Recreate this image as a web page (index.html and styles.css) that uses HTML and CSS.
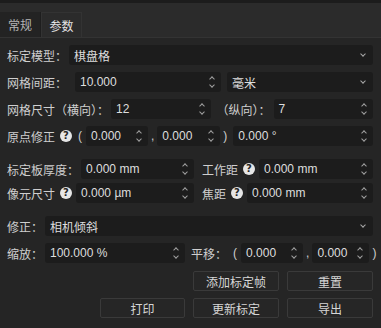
FILE: index.html
```html
<!DOCTYPE html>
<html lang="zh">
<head>
  <meta charset="UTF-8">
  <title>标定参数</title>
  <link rel="stylesheet" href="styles.css">
</head>
<body>
  <div class="tabs">
    <div class="tab">常规</div>
    <div class="tab active">参数</div>
  </div>

  <div class="panel">
    <!-- 标定模型 / 网格 -->
    <div class="group">
      <div class="row">
        <span class="label">标定模型：</span>
        <div class="box combo grow"><span>棋盘格</span><i class="chev"></i></div>
      </div>
      <div class="row gap6">
        <span class="label">网格间距：</span>
        <div class="box spin grow"><span>10.000</span><i class="arrows"></i></div>
        <div class="box combo grow"><span>毫米</span><i class="chev"></i></div>
      </div>
      <div class="row">
        <span class="label">网格尺寸（横向）：</span>
        <div class="box spin grow"><span>12</span><i class="arrows"></i></div>
        <span class="label mid">（纵向）：</span>
        <div class="box spin grow"><span>7</span><i class="arrows"></i></div>
      </div>
      <div class="row">
        <span class="label">原点修正</span><i class="help"></i>
        <span class="paren">(</span>
        <div class="box spin w62"><span>0.000</span><i class="arrows"></i></div>
        <span class="comma">,</span>
        <div class="box spin w63"><span>0.000</span><i class="arrows"></i></div>
        <span class="paren close">)</span>
        <div class="box spin grow"><span>0.000 °</span><i class="arrows"></i></div>
      </div>
    </div>

    <!-- 标定板 / 相机 -->
    <div class="group tight">
      <div class="row">
        <div class="half">
          <span class="label">标定板厚度：</span>
          <div class="box spin grow"><span>0.000 mm</span><i class="arrows"></i></div>
        </div>
        <div class="half right">
          <span class="label">工作距</span><i class="help"></i>
          <div class="box spin grow"><span>0.000 mm</span><i class="arrows"></i></div>
        </div>
      </div>
      <div class="row">
        <div class="half">
          <span class="label">像元尺寸</span><i class="help"></i>
          <div class="box spin grow"><span>0.000 µm</span><i class="arrows"></i></div>
        </div>
        <div class="half right">
          <span class="label">焦距</span><i class="help"></i>
          <div class="box spin grow"><span>0.000 mm</span><i class="arrows"></i></div>
        </div>
      </div>
    </div>

    <!-- 修正 -->
    <div class="group">
      <div class="row">
        <span class="label">修正：</span>
        <div class="box combo grow"><span>相机倾斜</span><i class="chev"></i></div>
      </div>
      <div class="row">
        <span class="label">缩放：</span>
        <div class="box spin w140"><span>100.000 %</span><i class="arrows"></i></div>
        <span class="label shift">平移：</span>
        <span class="paren">(</span>
        <div class="box spin w62"><span>0.000</span><i class="arrows"></i></div>
        <span class="comma">,</span>
        <div class="box spin w57"><span>0.000</span><i class="arrows"></i></div>
        <span class="paren close">)</span>
      </div>
    </div>

    <div class="buttons">
      <span></span>
      <button>添加标定帧</button>
      <button>重置</button>
      <button>打印</button>
      <button>更新标定</button>
      <button>导出</button>
    </div>
  </div>
</body>
</html>
```

FILE: styles.css
```css
* { margin: 0; padding: 0; box-sizing: border-box; }
html, body {
  height: 100%;
}
body {
  background-color: #252525;
  font-family: "Liberation Sans", "Noto Sans CJK SC", sans-serif;
  font-size: 12px;
  color: #d6d6d6;
  overflow: hidden;
}

/* 顶部标签页 */
.tabs {
  display: flex;
  height: 37px;
  padding-top: 12px;
  background: #2b2b2b;
  border-top: 3px solid #1c1c1c;
}
.tab {
  width: 41px;
  display: flex;
  align-items: center;
  justify-content: center;
  color: #b4b4b4;
  background: #232323;
  border-right: 1px solid #1e1e1e;
  margin-top: -3px;
}
.tab.active {
  background: #2b2b2b;
  color: #e4e4e4;
  border: 1px solid #333;
  border-bottom: none;
}

.panel {
  border-top: 1px solid #333;
  padding: 7px 8px 10px 7px;
  background: #252525;
}

.group {
  display: flex;
  flex-direction: column;
  gap: 7px;
  margin-bottom: 13px;
}
.group.tight { gap: 4px; }

.row {
  display: flex;
  align-items: center;
  height: 20px;
}
.row.gap6 { gap: 6px; }

.label {
  white-space: nowrap;
  color: #cfcfcf;
  margin-right: 2px;
}
.label.mid { margin: 0 3px 0 6px; }
.label.shift { margin-left: 6px; margin-right: 4px; }

.half {
  display: flex;
  align-items: center;
  width: 187px;
  height: 20px;
}
.half.right {
  width: auto;
  flex: 1;
  margin-left: 8px;
}

.help {
  width: 12px;
  height: 12px;
  border-radius: 50%;
  background: #e6e6e6;
  margin: 0 4px 0 3px;
  flex: none;
  position: relative;
}
.help::after {
  content: "?";
  position: absolute;
  inset: 0;
  text-align: center;
  font: bold 10px/12px "DejaVu Sans", sans-serif;
  color: #262626;
}

.paren { margin: 0 4px 0 2px; color: #cfcfcf; }
.paren.close { margin: 0 6px 0 3px; }
.comma { margin: 0 3px; color: #cfcfcf; }

.box {
  height: 20px;
  background: #1c1c1c;
  border-radius: 3px;
  display: flex;
  align-items: center;
  padding-left: 5px;
  position: relative;
  color: #dedede;
  flex: none;
}
.box span { flex: 1; white-space: nowrap; }
.grow { flex: 1 1 0; min-width: 0; }
.w62 { width: 62px; }
.w63 { width: 63px; }
.w57 { width: 57px; }
.w140 { width: 140px; }

/* 下拉箭头 */
.chev {
  width: 4px;
  height: 4px;
  border-right: 1px solid #a8a8a8;
  border-bottom: 1px solid #a8a8a8;
  transform: rotate(45deg);
  margin: -2px 8px 0 0;
}

/* 微调箭头 */
.arrows {
  width: 6px;
  height: 14px;
  margin-right: 6px;
  position: relative;
}
.arrows::before,
.arrows::after {
  content: "";
  position: absolute;
  left: 1px;
  width: 3px;
  height: 3px;
  border-left: 1px solid #a0a0a0;
  border-top: 1px solid #a0a0a0;
}
.arrows::before { top: 2px; transform: rotate(45deg); }
.arrows::after { bottom: 2px; transform: rotate(-135deg); }

/* 按钮 */
.buttons {
  display: grid;
  grid-template-columns: 85px 86px 86px;
  justify-content: end;
  column-gap: 8px;
  row-gap: 7px;
  margin-top: -5px;
}
.buttons button {
  height: 20px;
  font: inherit;
  color: #d6d6d6;
  background: #262626;
  border: 1px solid #3a3a3a;
  border-radius: 2px;
}
```
